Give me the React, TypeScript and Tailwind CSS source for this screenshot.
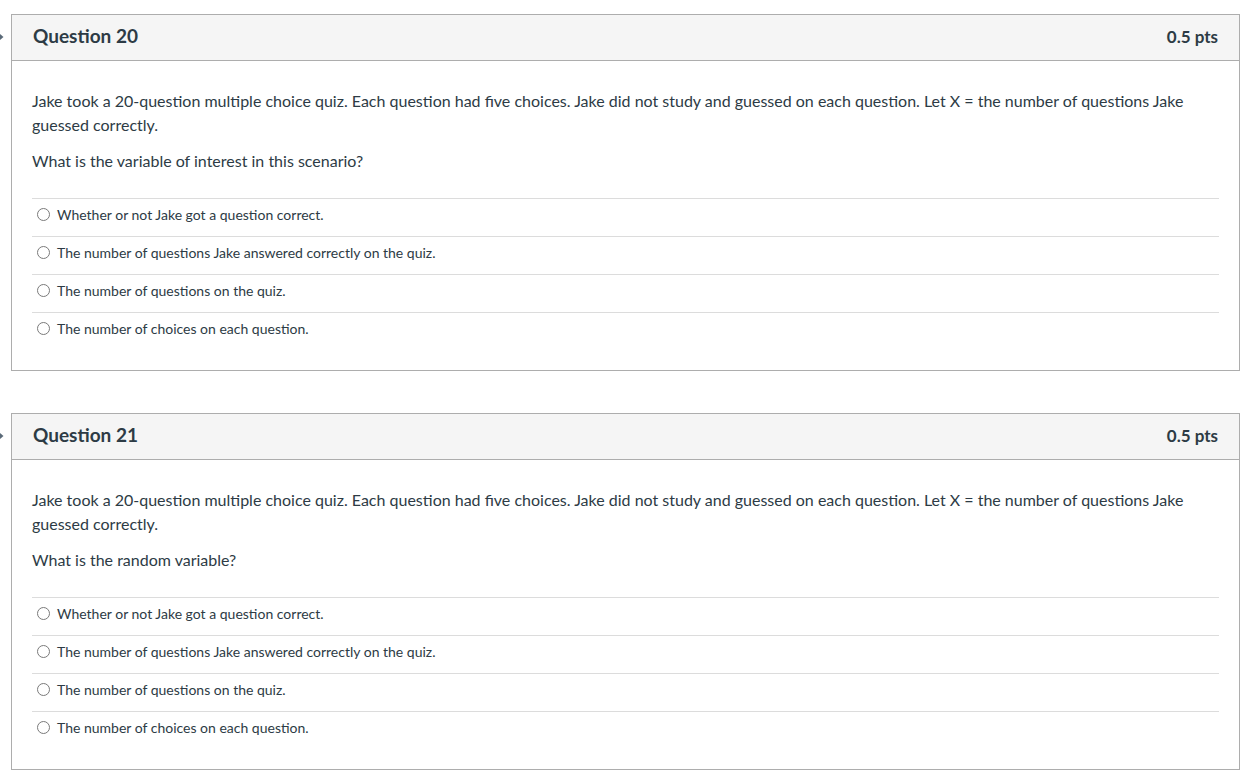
const answers = [
  'Whether or not Jake got a question correct.',
  'The number of questions Jake answered correctly on the quiz.',
  'The number of questions on the quiz.',
  'The number of choices on each question.',
]

const questions = [
  { n: 20, prompt: 'What is the variable of interest in this scenario?' },
  { n: 21, prompt: 'What is the random variable?' },
]

function Question({ n, prompt }: { n: number; prompt: string }) {
  return (
    <div className="relative border border-[#adadad] bg-white">
      {/* little expand arrow off to the left */}
      <svg className="absolute left-[-12px] top-[18px]" width="4" height="8" viewBox="0 0 4 8">
        <path d="M0 1 L3.5 4 L0 7 Z" fill="#5a6a78" />
      </svg>

      {/* Header */}
      <div className="flex h-[46px] items-center justify-between border-b border-[#adadad] bg-[#f5f5f5] px-[21px] pb-[3px]">
        <span className="text-[19px] font-bold text-[#2d3b45]">Question {n}</span>
        <span className="pt-[2px] text-[17px] font-bold text-[#2d3b45]">0.5 pts</span>
      </div>

      {/* Body */}
      <div className="px-[20px] pt-[28px] pb-[20px]">
        <p className="text-[16px] leading-[24px] text-[#2d3b45]">
          Jake took a 20-question multiple choice quiz. Each question had five choices. Jake did not study and
          guessed on each question. Let X = the number of questions Jake guessed correctly.
        </p>
        <p className="mt-[12px] text-[16px] leading-[24px] text-[#2d3b45]">{prompt}</p>

        <div className="mt-[25px]">
          {answers.map((a) => (
            <label key={a} className="flex h-[38px] items-center border-t border-[#dcdcdc] pb-[6px] pl-[5px]">
              <span className="h-[13px] w-[13px] rounded-full border border-[#7a7a7a] bg-white" />
              <span className="ml-[7px] text-[14px] text-[#2d3b45]">{a}</span>
            </label>
          ))}
        </div>
      </div>
    </div>
  )
}

export default function App() {
  return (
    <div className="min-h-screen bg-white pl-[11px] pr-[14px] pt-[14px] font-['Lato',sans-serif]">
      <div className="flex flex-col gap-[42px]">
        {questions.map((q) => (
          <Question key={q.n} n={q.n} prompt={q.prompt} />
        ))}
      </div>
    </div>
  )
}
